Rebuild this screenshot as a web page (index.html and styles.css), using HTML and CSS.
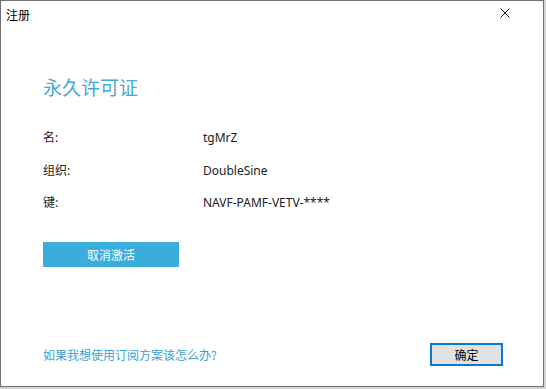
FILE: index.html
```html
<!DOCTYPE html>
<html lang="zh-CN">
<head>
<meta charset="utf-8">
<title>注册</title>
<link rel="stylesheet" href="styles.css">
</head>
<body>
<div class="window">
  <div class="titlebar">
    <span class="title">注册</span>
    <span class="close" aria-label="关闭">
      <svg width="10" height="10" viewBox="0 0 10 10"><path d="M0.5 0.5 L9.5 9.5 M9.5 0.5 L0.5 9.5" stroke="#111" stroke-width="1" fill="none"/></svg>
    </span>
  </div>
  <div class="content">
    <h1 class="heading">永久许可证</h1>
    <div class="info">
      <div class="label">名:</div><div class="value">tgMrZ</div>
      <div class="label">组织:</div><div class="value">DoubleSine</div>
      <div class="label">键:</div><div class="value">NAVF-PAMF-VETV-****</div>
    </div>
    <button class="btn-primary">取消激活</button>
    <div class="footer">
      <a class="link" href="#">如果我想使用订阅方案该怎么办?</a>
      <button class="btn-ok">确定</button>
    </div>
  </div>
</div>
</body>
</html>
```

FILE: styles.css
```css
* { box-sizing: border-box; }
html, body { margin: 0; padding: 0; }
body {
  width: 546px;
  height: 389px;
  background: #d4d4d4;
  font-family: "Noto Sans", "Noto Sans CJK SC", sans-serif;
  font-size: 12px;
  color: #222;
  overflow: hidden;
}
.window {
  width: 544px;
  height: 387px;
  background: #fff;
  border: 1px solid #6f6f6f;
  display: flex;
  flex-direction: column;
}
.titlebar {
  height: 27px;
  display: flex;
  align-items: center;
  justify-content: space-between;
  padding-left: 5px;
  padding-right: 33px;
}
.title {
  font-family: "Noto Sans CJK SC", sans-serif;
  font-size: 12px;
  color: #000;
}
.close { display: flex; width: 10px; height: 10px; margin-top: -3px; }
.content {
  flex: 1;
  display: flex;
  flex-direction: column;
  align-items: flex-start;
  padding: 0 40px 20px 42px;
}
.heading {
  margin: 45px 0 0 0;
  font-family: "Noto Sans CJK SC", sans-serif;
  font-weight: normal;
  font-size: 19px;
  line-height: 28px;
  color: #45a9d9;
}
.info {
  margin-top: 21px;
  display: grid;
  grid-template-columns: 160px auto;
  grid-auto-rows: 32.5px;
  align-items: center;
}
.label, .value { line-height: 16px; }
.btn-primary {
  margin-top: 22px;
  width: 136px;
  height: 25px;
  border: none;
  background: #3aaddc;
  color: #fff;
  font-family: "Noto Sans CJK SC", sans-serif;
  font-size: 12px;
  padding: 0;
}
.footer {
  margin-top: auto;
  width: 100%;
  display: flex;
  justify-content: space-between;
  align-items: center;
}
.link {
  color: #3a9fd3;
  text-decoration: none;
  font-family: "Noto Sans CJK SC", sans-serif;
  font-size: 12px;
}
.btn-ok {
  width: 73px;
  height: 23px;
  border: 2px solid #0a78d4;
  background: #e1e1e1;
  color: #000;
  font-family: "Noto Sans CJK SC", sans-serif;
  font-size: 12px;
  padding: 0;
}
```
